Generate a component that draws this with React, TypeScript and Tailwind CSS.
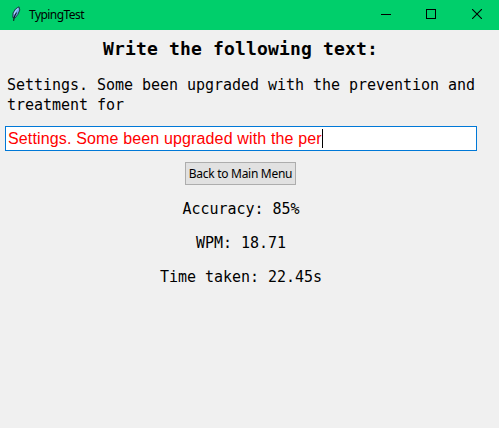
import React from "react";

const mono = "font-['DejaVu_Sans_Mono',monospace]";
const ui = "font-['Noto_Sans','Open_Sans',sans-serif]";

function FeatherIcon() {
  return (
    <svg width="10" height="16" viewBox="0 0 10 16" className="-mt-0.5 ml-[11px] shrink-0">
      <path d="M8 0.8 L4.5 3 L2 7 L1.8 11.5 L4 12 L6.8 8.5 L8.8 4 Z" fill="#6fa8ea" stroke="#14202e" strokeWidth="0.8" />
      <path d="M5.5 6.5 L3.2 11 L2.6 14.8" fill="none" stroke="#10151c" strokeWidth="1.1" />
      <path d="M7 2.5 L4.6 4.8 L3.4 8" fill="none" stroke="#c4e0ff" strokeWidth="1" />
    </svg>
  );
}

function TitleBar() {
  return (
    <header className="flex h-[30px] items-center bg-[#00cf6b] text-black">
      <FeatherIcon />
      <span className={`${ui} ml-2 w-[56px] whitespace-nowrap text-[12px] leading-4 tracking-[-0.55px]`}>
        TypingTest
      </span>
      <div className="-mt-[2px] ml-auto mr-[17px] flex items-center">
        <svg width="10" height="10" viewBox="0 0 10 10" shapeRendering="crispEdges">
          <rect y="5" width="10" height="1" />
        </svg>
        <svg width="10" height="10" viewBox="0 0 10 10" className="ml-[35px]" shapeRendering="crispEdges">
          <rect x="0.5" y="0.5" width="9" height="9" fill="none" stroke="black" />
        </svg>
        <svg width="10" height="10" viewBox="0 0 10 10" className="ml-[36px]">
          <path d="M0 0 L10 10 M10 0 L0 10" stroke="black" strokeWidth="1.1" />
        </svg>
      </div>
    </header>
  );
}

export default function App() {
  return (
    <div className="h-[428px] w-[499px] overflow-hidden bg-[#f0f0f0] text-black">
      <TitleBar />
      <main className="flex w-[481px] flex-col items-center">
        <h1 className={`${mono} mt-[7px] whitespace-pre text-[18px] font-bold leading-6 tracking-[0.16px]`}>
          Write the following text:
        </h1>
        <p className={`${mono} mt-[14px] w-[476px] whitespace-pre self-start pl-[7px] text-[15px] leading-5 tracking-[-0.031px]`}>
          {"Settings. Some been upgraded with the prevention and\ntreatment for"}
        </p>
        <div className="ml-[5px] mt-[11px] flex h-[25px] w-[472px] items-center self-start border border-[#0078d7] bg-white pl-[2px]">
          <span className="whitespace-nowrap font-['Liberation_Sans',Arial,sans-serif] text-[16px] leading-5 tracking-[0.146px] text-[#ff0000]">
            Settings. Some been upgraded with the per
          </span>
          <span className="h-[19px] w-px bg-black" />
        </div>
        <button
          className={`${ui} mt-[11px] flex h-[23px] w-[111px] items-center justify-center whitespace-nowrap border border-[#adadad] bg-[#e1e1e1] text-[12px] leading-4 tracking-[-0.28px]`}
        >
          Back to Main Menu
        </button>
        <div className={`${mono} mt-[14px] flex flex-col items-center gap-[14px] pl-px text-[15px] leading-5 tracking-[-0.031px]`}>
          <p>Accuracy: 85%</p>
          <p>WPM: 18.71</p>
          <p>Time taken: 22.45s</p>
        </div>
      </main>
    </div>
  );
}
